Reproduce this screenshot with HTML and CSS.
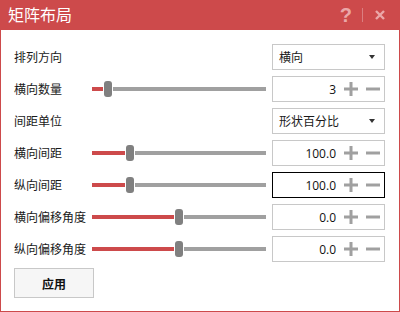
FILE: index.html
```html
<!DOCTYPE html>
<html lang="zh">
<head>
    <meta charset="UTF-8">
    <title>矩阵布局</title>
    <link rel="stylesheet" href="styles.css">
</head>
<body>
    <div class="window">
        <div class="titlebar">
            <span class="title">矩阵布局</span>
            <div class="controls">
                <span class="help">?</span>
                <span class="sep"></span>
                <svg class="close" width="12" height="12" viewBox="0 0 12 12">
                    <path d="M2 2 L10 10 M10 2 L2 10" stroke="currentColor" stroke-width="2.4" fill="none"/>
                </svg>
            </div>
        </div>

        <div class="content">
            <div class="row">
                <span class="label">排列方向</span>
                <span></span>
                <div class="box select"><span>横向</span><span class="arrow"></span></div>
            </div>

            <div class="row">
                <span class="label">横向数量</span>
                <div class="slider">
                    <span class="fill" style="width: 11px"></span><span class="thumb"></span><span class="track"></span>
                </div>
                <div class="box number">
                    <span class="value">3</span>
                    <svg class="step" width="14" height="14" viewBox="0 0 14 14"><path d="M0 7 H14 M7 0 V14" /></svg>
                    <svg class="step" width="14" height="14" viewBox="0 0 14 14"><path d="M0 7 H14" /></svg>
                </div>
            </div>

            <div class="row">
                <span class="label">间距单位</span>
                <span></span>
                <div class="box select"><span>形状百分比</span><span class="arrow"></span></div>
            </div>

            <div class="row">
                <span class="label">横向间距</span>
                <div class="slider">
                    <span class="fill" style="width: 33px"></span><span class="thumb"></span><span class="track"></span>
                </div>
                <div class="box number">
                    <span class="value">100.0</span>
                    <svg class="step" width="14" height="14" viewBox="0 0 14 14"><path d="M0 7 H14 M7 0 V14" /></svg>
                    <svg class="step" width="14" height="14" viewBox="0 0 14 14"><path d="M0 7 H14" /></svg>
                </div>
            </div>

            <div class="row">
                <span class="label">纵向间距</span>
                <div class="slider">
                    <span class="fill" style="width: 33px"></span><span class="thumb"></span><span class="track"></span>
                </div>
                <div class="box number focused">
                    <span class="value">100.0</span>
                    <svg class="step" width="14" height="14" viewBox="0 0 14 14"><path d="M0 7 H14 M7 0 V14" /></svg>
                    <svg class="step" width="14" height="14" viewBox="0 0 14 14"><path d="M0 7 H14" /></svg>
                </div>
            </div>

            <div class="row">
                <span class="label">横向偏移角度</span>
                <div class="slider">
                    <span class="fill" style="width: 82px"></span><span class="thumb"></span><span class="track"></span>
                </div>
                <div class="box number">
                    <span class="value">0.0</span>
                    <svg class="step" width="14" height="14" viewBox="0 0 14 14"><path d="M0 7 H14 M7 0 V14" /></svg>
                    <svg class="step" width="14" height="14" viewBox="0 0 14 14"><path d="M0 7 H14" /></svg>
                </div>
            </div>

            <div class="row">
                <span class="label">纵向偏移角度</span>
                <div class="slider">
                    <span class="fill" style="width: 82px"></span><span class="thumb"></span><span class="track"></span>
                </div>
                <div class="box number">
                    <span class="value">0.0</span>
                    <svg class="step" width="14" height="14" viewBox="0 0 14 14"><path d="M0 7 H14 M7 0 V14" /></svg>
                    <svg class="step" width="14" height="14" viewBox="0 0 14 14"><path d="M0 7 H14" /></svg>
                </div>
            </div>

            <button class="apply">应用</button>
        </div>
    </div>
</body>
</html>
```

FILE: styles.css
```css
body {
    margin: 0;
    padding: 0;
    background: #fff;
    font-family: "Noto Sans", "Noto Sans CJK SC", sans-serif;
    font-size: 12px;
    color: #1a1a1a;
}
.window {
    width: 400px;
    height: 312px;
    box-sizing: border-box;
    border: 1px solid #cd4a4b;
    border-top: none;
    background: #fff;
}
.titlebar {
    height: 30px;
    margin: 0 -1px;
    background: #cd4a4b;
    color: #fff;
    display: flex;
    align-items: center;
    justify-content: space-between;
    padding: 0 14px 0 8px;
}
.title {
    font-size: 16px;
    line-height: 30px;
}
.controls {
    display: flex;
    align-items: center;
    color: #eba7a8;
}
.help {
    font-family: "Liberation Sans", sans-serif;
    font-weight: bold;
    font-size: 20px;
    line-height: 20px;
}
.sep {
    width: 1px;
    height: 14px;
    background: #db7e80;
    margin: 0 11px 0 10px;
}
.content {
    padding: 14px 13px 0 13px;
    display: flex;
    flex-direction: column;
    gap: 6px;
}
.row {
    display: grid;
    grid-template-columns: 78px 174px 119px;
    height: 26px;
    align-items: center;
}
.row .box {
    margin-left: 6px;
}
.label {
    white-space: nowrap;
}
.slider {
    display: flex;
    align-items: center;
    height: 16px;
}
.fill {
    height: 4px;
    background: #cd4a4b;
}
.thumb {
    width: 8px;
    height: 16px;
    border-radius: 3px;
    background: #808080;
    margin: 0 1px;
}
.track {
    flex: 1;
    height: 4px;
    background: #a0a0a0;
}
.box {
    height: 26px;
    box-sizing: border-box;
    border: 1px solid #c8c8c8;
    display: flex;
    align-items: center;
    background: #fff;
}
.box.focused {
    border-color: #000;
}
.select {
    justify-content: space-between;
    padding: 0 9px 0 6px;
}
.arrow {
    width: 0;
    height: 0;
    border-left: 3px solid transparent;
    border-right: 3px solid transparent;
    border-top: 4px solid #333;
}
.number {
    padding-right: 4px;
    gap: 8px;
}
.value {
    flex: 1;
    text-align: right;
    font-family: "Open Sans", "Noto Sans", sans-serif;
    font-size: 12px;
    color: #111;
}
.step path {
    stroke: #a0a0a0;
    stroke-width: 3;
    fill: none;
}
.apply {
    align-self: flex-start;
    width: 80px;
    height: 30px;
    background: #f6f6f6;
    border: 1px solid #c8c8c8;
    font-family: "Noto Sans CJK SC", sans-serif;
    font-size: 12px;
    font-weight: bold;
    color: #111;
    padding: 0;
}
```
